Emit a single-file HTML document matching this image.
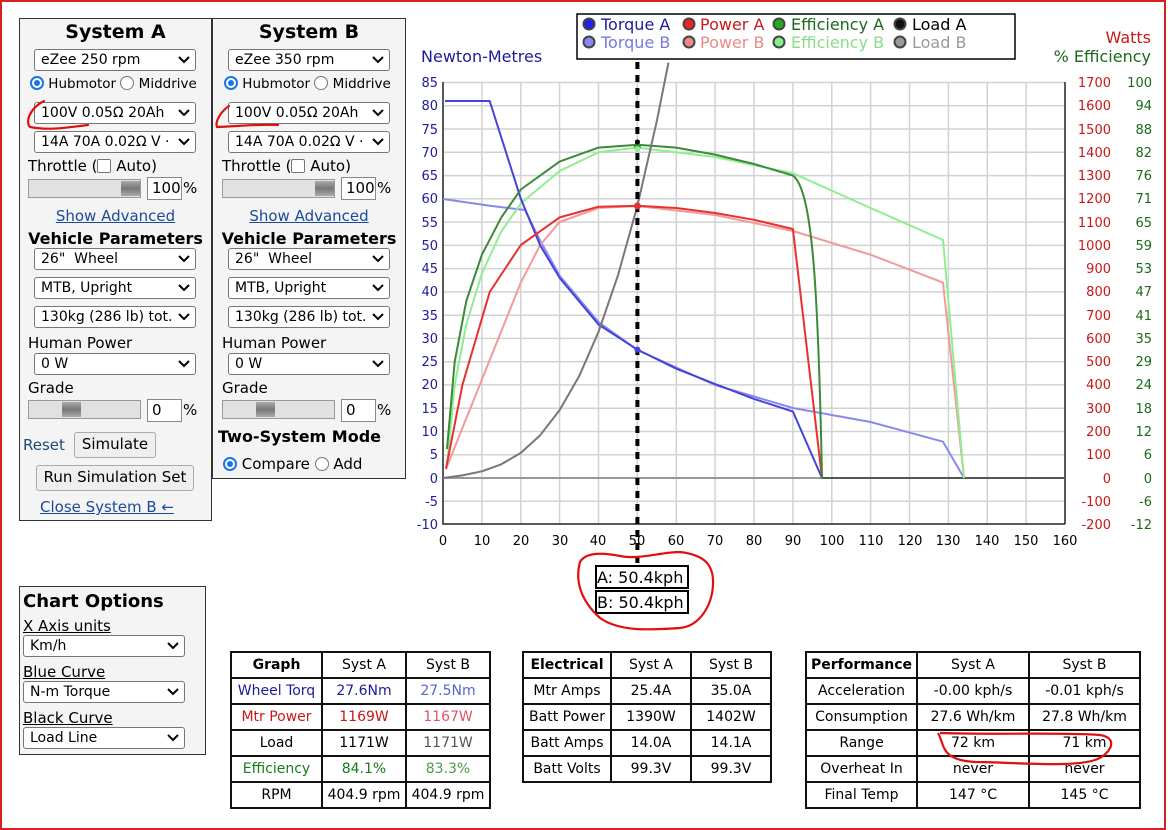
<!DOCTYPE html>
<html><head><meta charset="utf-8"><style>
*{box-sizing:border-box;margin:0;padding:0}
body{width:1168px;height:830px;position:relative;background:#fff;font-family:"DejaVu Sans","Liberation Sans",sans-serif;overflow:hidden;color:#000}
.a{position:absolute;white-space:nowrap}
.panel{position:absolute;background:#f4f4f4;border:1px solid #333}
.sel{position:absolute;background:#fff;border:1px solid #767676;border-radius:3px;font-size:14px;line-height:20px;padding-left:6px;height:22px;overflow:hidden;white-space:nowrap}
.sel svg{position:absolute;right:5px;top:6px;background:#fff}
.t{font-size:15px}
.radio{display:inline-block;width:14px;height:14px;border-radius:50%;border:1px solid #767676;background:#fff;vertical-align:-2px;position:relative}
.radio.on{border:2px solid #1a73e8}
.radio.on:after{content:"";position:absolute;left:2px;top:2px;width:6px;height:6px;border-radius:50%;background:#1a73e8}
.cb{display:inline-block;width:14px;height:14px;border:1px solid #767676;border-radius:2px;background:#fff;vertical-align:-2px}
.slider{position:absolute;height:19px;background:#e1e1e1;border:1px solid #999}
.thumb{position:absolute;top:1px;width:19px;height:15px;background:linear-gradient(#aaa,#777,#aaa)}
.inp{position:absolute;background:#fff;border:1px solid #888;font-size:15px;line-height:20px;padding-left:4px;height:23px}
.btn{position:absolute;background:#efefef;border:1px solid #aaa;border-radius:3px;font-size:15px;text-align:center;line-height:22px}
.lnk{color:#1a4a9a;text-decoration:underline}
table{position:absolute;border-collapse:collapse;font-size:14px;text-align:center}
td{border:2px solid #111;height:26px;padding:0}
th{border:2px solid #111;height:26px;font-weight:bold}
</style></head><body>
<div style="position:absolute;left:0;top:0;width:1166px;height:830px;border:2px solid #d82020"></div>

<!-- System A -->
<div class="panel" style="left:19px;top:18px;width:193px;height:503px"></div>
<div class="a" style="left:19px;top:21px;width:193px;text-align:center;font-weight:bold;font-size:19px">System A</div>
<div class="sel" style="left:34px;top:49px;width:162px">eZee 250 rpm<svg width="12" height="8"><path d="M1 1l5 5 5-5" fill="none" stroke="#000" stroke-width="2"/></svg></div>
<div class="a" style="left:30px;top:76px;font-size:13.5px"><span class="radio on"></span> Hubmotor <span class="radio"></span> Middrive</div>
<div class="sel" style="left:34px;top:102px;width:162px">100V 0.05Ω 20Ah<svg width="12" height="8"><path d="M1 1l5 5 5-5" fill="none" stroke="#000" stroke-width="2"/></svg></div>
<div class="sel" style="left:34px;top:131px;width:162px">14A 70A 0.02Ω V ·<svg width="12" height="8"><path d="M1 1l5 5 5-5" fill="none" stroke="#000" stroke-width="2"/></svg></div>
<div class="a t" style="left:28px;top:157px">Throttle (<span class="cb"></span> Auto)</div>
<div class="slider" style="left:28px;top:179px;width:113px"><div class="thumb" style="left:92px"></div></div>
<div class="inp" style="left:147px;top:177px;width:35px">100</div><div class="a t" style="left:183px;top:179px">%</div>
<div class="a t lnk" style="left:19px;top:207px;width:193px;text-align:center">Show Advanced</div>
<div class="a" style="left:19px;top:229px;width:193px;text-align:center;font-weight:bold;font-size:16px">Vehicle Parameters</div>
<div class="sel" style="left:34px;top:248px;width:162px">26"&nbsp; Wheel<svg width="12" height="8"><path d="M1 1l5 5 5-5" fill="none" stroke="#000" stroke-width="2"/></svg></div>
<div class="sel" style="left:34px;top:277px;width:162px">MTB, Upright<svg width="12" height="8"><path d="M1 1l5 5 5-5" fill="none" stroke="#000" stroke-width="2"/></svg></div>
<div class="sel" style="left:34px;top:306px;width:162px">130kg (286 lb) tot.<svg width="12" height="8"><path d="M1 1l5 5 5-5" fill="none" stroke="#000" stroke-width="2"/></svg></div>
<div class="a t" style="left:28px;top:334px">Human Power</div>
<div class="sel" style="left:34px;top:353px;width:162px">0 W<svg width="12" height="8"><path d="M1 1l5 5 5-5" fill="none" stroke="#000" stroke-width="2"/></svg></div>
<div class="a t" style="left:28px;top:379px">Grade</div>
<div class="slider" style="left:28px;top:400px;width:113px"><div class="thumb" style="left:33px"></div></div>
<div class="inp" style="left:147px;top:399px;width:35px">0</div><div class="a t" style="left:183px;top:401px">%</div>
<div class="a t" style="left:23px;top:436px;color:#1a4a7a">Reset</div>
<div class="btn" style="left:74px;top:432px;width:82px;height:26px">Simulate</div>
<div class="btn" style="left:36px;top:465px;width:158px;height:26px">Run Simulation Set</div>
<div class="a t lnk" style="left:40px;top:498px">Close System B ←</div>

<!-- System B -->
<div class="panel" style="left:212px;top:18px;width:194px;height:461px"></div>
<div class="a" style="left:212px;top:21px;width:194px;text-align:center;font-weight:bold;font-size:19px">System B</div>
<div class="sel" style="left:228px;top:49px;width:162px">eZee 350 rpm<svg width="12" height="8"><path d="M1 1l5 5 5-5" fill="none" stroke="#000" stroke-width="2"/></svg></div>
<div class="a" style="left:224px;top:76px;font-size:13.5px"><span class="radio on"></span> Hubmotor <span class="radio"></span> Middrive</div>
<div class="sel" style="left:228px;top:102px;width:162px">100V 0.05Ω 20Ah<svg width="12" height="8"><path d="M1 1l5 5 5-5" fill="none" stroke="#000" stroke-width="2"/></svg></div>
<div class="sel" style="left:228px;top:131px;width:162px">14A 70A 0.02Ω V ·<svg width="12" height="8"><path d="M1 1l5 5 5-5" fill="none" stroke="#000" stroke-width="2"/></svg></div>
<div class="a t" style="left:222px;top:157px">Throttle (<span class="cb"></span> Auto)</div>
<div class="slider" style="left:222px;top:179px;width:113px"><div class="thumb" style="left:92px"></div></div>
<div class="inp" style="left:341px;top:177px;width:35px">100</div><div class="a t" style="left:377px;top:179px">%</div>
<div class="a t lnk" style="left:212px;top:207px;width:194px;text-align:center">Show Advanced</div>
<div class="a" style="left:212px;top:229px;width:194px;text-align:center;font-weight:bold;font-size:16px">Vehicle Parameters</div>
<div class="sel" style="left:228px;top:248px;width:162px">26"&nbsp; Wheel<svg width="12" height="8"><path d="M1 1l5 5 5-5" fill="none" stroke="#000" stroke-width="2"/></svg></div>
<div class="sel" style="left:228px;top:277px;width:162px">MTB, Upright<svg width="12" height="8"><path d="M1 1l5 5 5-5" fill="none" stroke="#000" stroke-width="2"/></svg></div>
<div class="sel" style="left:228px;top:306px;width:162px">130kg (286 lb) tot.<svg width="12" height="8"><path d="M1 1l5 5 5-5" fill="none" stroke="#000" stroke-width="2"/></svg></div>
<div class="a t" style="left:222px;top:334px">Human Power</div>
<div class="sel" style="left:228px;top:353px;width:162px">0 W<svg width="12" height="8"><path d="M1 1l5 5 5-5" fill="none" stroke="#000" stroke-width="2"/></svg></div>
<div class="a t" style="left:222px;top:379px">Grade</div>
<div class="slider" style="left:222px;top:400px;width:113px"><div class="thumb" style="left:33px"></div></div>
<div class="inp" style="left:341px;top:399px;width:35px">0</div><div class="a t" style="left:377px;top:401px">%</div>
<div class="a" style="left:218px;top:427px;font-weight:bold;font-size:16px">Two-System Mode</div>
<div class="a t" style="left:223px;top:455px"><span class="radio on"></span> Compare <span class="radio"></span> Add</div>

<!-- Chart options -->
<div class="panel" style="left:19px;top:586px;width:187px;height:169px"></div>
<div class="a" style="left:23px;top:591px;font-weight:bold;font-size:18px">Chart Options</div>
<div class="a t" style="left:23px;top:617px;text-decoration:underline">X Axis units</div>
<div class="sel" style="left:23px;top:635px;width:162px">Km/h<svg width="12" height="8"><path d="M1 1l5 5 5-5" fill="none" stroke="#000" stroke-width="2"/></svg></div>
<div class="a t" style="left:23px;top:663px;text-decoration:underline">Blue Curve</div>
<div class="sel" style="left:23px;top:681px;width:162px">N-m Torque<svg width="12" height="8"><path d="M1 1l5 5 5-5" fill="none" stroke="#000" stroke-width="2"/></svg></div>
<div class="a t" style="left:23px;top:709px;text-decoration:underline">Black Curve</div>
<div class="sel" style="left:23px;top:727px;width:162px">Load Line<svg width="12" height="8"><path d="M1 1l5 5 5-5" fill="none" stroke="#000" stroke-width="2"/></svg></div>

<!-- Chart -->
<svg class="a" style="left:0;top:0" width="1168" height="830" font-family="DejaVu Sans, Liberation Sans, sans-serif">
<g stroke="#d2d2d2" stroke-width="1.5" fill="none">
<path d="M481.9 82V524M520.8 82V524M559.6 82V524M598.5 82V524M637.4 82V524M676.3 82V524M715.1 82V524M754 82V524M792.9 82V524M831.8 82V524M870.6 82V524M909.5 82V524M948.4 82V524M987.3 82V524M1026.1 82V524"/>
<path d="M443 82.5H1065M443 105.8H1065M443 129H1065M443 152.3H1065M443 175.6H1065M443 198.8H1065M443 222.1H1065M443 245.4H1065M443 268.6H1065M443 291.9H1065M443 315.2H1065M443 338.4H1065M443 361.7H1065M443 384.9H1065M443 408.2H1065M443 431.5H1065M443 454.7H1065M443 501.3H1065"/>
</g>
<path d="M443 478H1065" stroke="#999" stroke-width="2"/>
<path d="M443 82V524H1065M1065 82V524" stroke="#222" stroke-width="1.5" fill="none"/>
<g font-size="13" fill="#1c1c9a" text-anchor="end">
<text x="438" y="87">85</text><text x="438" y="110">80</text><text x="438" y="134">75</text><text x="438" y="157">70</text><text x="438" y="180">65</text><text x="438" y="203">60</text><text x="438" y="227">55</text><text x="438" y="250">50</text><text x="438" y="273">45</text><text x="438" y="296">40</text><text x="438" y="320">35</text><text x="438" y="343">30</text><text x="438" y="366">25</text><text x="438" y="389">20</text><text x="438" y="413">15</text><text x="438" y="436">10</text><text x="438" y="459">5</text><text x="438" y="483">0</text><text x="438" y="506">-5</text><text x="438" y="529">-10</text>
</g>
<g font-size="13" fill="#c81818" text-anchor="end">
<text x="1111" y="87">1700</text><text x="1111" y="110">1600</text><text x="1111" y="134">1500</text><text x="1111" y="157">1400</text><text x="1111" y="180">1300</text><text x="1111" y="203">1200</text><text x="1111" y="227">1100</text><text x="1111" y="250">1000</text><text x="1111" y="273">900</text><text x="1111" y="296">800</text><text x="1111" y="320">700</text><text x="1111" y="343">600</text><text x="1111" y="366">500</text><text x="1111" y="389">400</text><text x="1111" y="413">300</text><text x="1111" y="436">200</text><text x="1111" y="459">100</text><text x="1111" y="483">0</text><text x="1111" y="506">-100</text><text x="1111" y="529">-200</text>
</g>
<g font-size="13" fill="#1a6a1a" text-anchor="end">
<text x="1152" y="87">100</text><text x="1152" y="110">94</text><text x="1152" y="134">88</text><text x="1152" y="157">82</text><text x="1152" y="180">76</text><text x="1152" y="203">71</text><text x="1152" y="227">65</text><text x="1152" y="250">59</text><text x="1152" y="273">53</text><text x="1152" y="296">47</text><text x="1152" y="320">41</text><text x="1152" y="343">35</text><text x="1152" y="366">29</text><text x="1152" y="389">24</text><text x="1152" y="413">18</text><text x="1152" y="436">12</text><text x="1152" y="459">6</text><text x="1152" y="483">0</text><text x="1152" y="506">-6</text><text x="1152" y="529">-12</text>
</g>
<g font-size="13" fill="#000" text-anchor="middle">
<text x="443" y="545">0</text><text x="482" y="545">10</text><text x="521" y="545">20</text><text x="560" y="545">30</text><text x="598" y="545">40</text><text x="637" y="545">50</text><text x="676" y="545">60</text><text x="715" y="545">70</text><text x="754" y="545">80</text><text x="793" y="545">90</text><text x="832" y="545">100</text><text x="871" y="545">110</text><text x="910" y="545">120</text><text x="948" y="545">130</text><text x="987" y="545">140</text><text x="1026" y="545">150</text><text x="1065" y="545">160</text>
</g>
<text x="421" y="62" font-size="16" fill="#1c1c9a">Newton-Metres</text>
<text x="1151" y="43" font-size="16" fill="#c81818" text-anchor="end">Watts</text>
<text x="1151" y="62" font-size="16" fill="#1a6a1a" text-anchor="end">% Efficiency</text>

<g fill="none" stroke-width="2" stroke-linejoin="round">
<path d="M822 478H1065" stroke="#555"/>
<path stroke="#8888ee" d="M443 199L490 205.8L525 210L540.2 240.7L559.6 275.6L598.5 322L637.4 350L715.1 385L792.9 408L870.6 422L943 441.7L964 478"/>
<path stroke="#f29a9a" d="M446 469L520.8 282.6L540.2 245L559.6 222L598.5 208L637.4 206L715.1 215L792.9 231L870.6 254.7L943 282.6L964 478"/>
<path stroke="#8fee8f" d="M447 464L454.7 385L466.3 324.5L481.9 273.3L501.3 231.4L520.8 203.5L559.6 171L598.5 152.3L637.4 147.6L715.1 157L792.9 173.2L870.6 208L943 240L964 478"/>
<path stroke="#4444dd" d="M445 101L489.7 101L520.8 198.8L540.2 245.4L559.6 277.9L598.5 324.5L637.4 349.6L676.3 368.7L715.1 384L754 398.9L792.9 411.5L822 478"/>
<path stroke="#e83030" d="M446 468.7L462.4 385L489.7 292L520.8 245L559.6 217.4L598.5 206.7L637.4 205.8L676.3 208L715.1 213L754 219.8L792.9 229L822 478"/>
<path stroke="#3a8a3a" d="M447 449L454.7 361.7L466.3 301L481.9 254.7L501.3 217.4L520.8 189.5L559.6 161.6L598.5 147.6L637.4 144.8L676.3 147.6L715.1 154.6L754 164L792.9 175.6C812 190 818 280 822 478"/>
<path stroke="#777" d="M443 478L462.4 475.4L481.9 471.3L501.3 464.3L520.8 452.9L540.2 435.2L559.6 410.1L579.1 376.3L598.5 331.9L617.9 275.6L637.4 205.8L656.8 121.1L668.5 62.5"/>
</g>
<path d="M637.4 62V600" stroke="#000" stroke-width="4" stroke-dasharray="7,6"/>
<circle cx="637.4" cy="349.6" r="3" fill="#4444dd"/><circle cx="637.4" cy="206" r="3.5" fill="#e83030"/><circle cx="637.4" cy="146" r="3.5" fill="#3a8a3a"/><circle cx="637.4" cy="149" r="3" fill="#8fee8f"/><circle cx="637.4" cy="142" r="2.5" fill="#000"/>

<!-- legend -->
<rect x="577" y="14" width="438" height="45" fill="#fff" stroke="#000" stroke-width="1.5"/>
<g font-size="16">
<circle cx="589" cy="24" r="5.5" fill="#2222ee" stroke="#444" stroke-width="2"/><text x="601" y="30" fill="#1c1c9a">Torque A</text>
<circle cx="689" cy="24" r="5.5" fill="#ee2222" stroke="#444" stroke-width="2"/><text x="700" y="30" fill="#c81818">Power A</text>
<circle cx="779" cy="24" r="5.5" fill="#22aa22" stroke="#444" stroke-width="2"/><text x="791" y="30" fill="#1a6a1a">Efficiency A</text>
<circle cx="900" cy="24" r="5.5" fill="#111" stroke="#444" stroke-width="2"/><text x="912" y="30" fill="#000">Load A</text>
<circle cx="589" cy="42" r="5.5" fill="#8888ee" stroke="#444" stroke-width="2"/><text x="601" y="48" fill="#7777dd">Torque B</text>
<circle cx="689" cy="42" r="5.5" fill="#f08888" stroke="#444" stroke-width="2"/><text x="700" y="48" fill="#ee8888">Power B</text>
<circle cx="779" cy="42" r="5.5" fill="#88ee88" stroke="#444" stroke-width="2"/><text x="791" y="48" fill="#88dd88">Efficiency B</text>
<circle cx="900" cy="42" r="5.5" fill="#999" stroke="#444" stroke-width="2"/><text x="912" y="48" fill="#999">Load B</text>
</g>
<rect x="596" y="566" width="92" height="22" fill="#fff" stroke="#000" stroke-width="2"/>
<text x="597" y="583" font-size="16">A: 50.4kph</text>
<rect x="596" y="591" width="92" height="22" fill="#fff" stroke="#000" stroke-width="2"/>
<text x="597" y="608" font-size="16">B: 50.4kph</text>
<g fill="none" stroke="#e01010" stroke-width="2.2" stroke-linecap="round">
<path d="M44 101C30 108 25 122 30 127C50 131 70 127 88 125"/>
<path d="M229 106C220 112 215 122 217 127C240 126 260 124 278 125"/>
<path d="M580 562C575 580 580 600 600 618C620 632 650 630 680 628C700 626 712 605 713 585C714 565 705 555 680 552C660 552 640 560 620 556C600 552 585 553 580 562"/>
</g>
</svg>

<table style="left:230px;top:651px;width:261px">
<tr><th style="width:91px">Graph</th><td style="width:84px">Syst A</td><td>Syst B</td></tr>
<tr style="color:#1c1c9a"><td>Wheel Torq</td><td>27.6Nm</td><td style="color:#5566cc">27.5Nm</td></tr>
<tr style="color:#c81818"><td>Mtr Power</td><td>1169W</td><td style="color:#dd5566">1167W</td></tr>
<tr><td>Load</td><td>1171W</td><td style="color:#555">1171W</td></tr>
<tr style="color:#1a7a1a"><td>Efficiency</td><td>84.1%</td><td style="color:#4a9a4a">83.3%</td></tr>
<tr><td>RPM</td><td>404.9 rpm</td><td>404.9 rpm</td></tr>
</table>
<table style="left:522px;top:651px;width:250px">
<tr><th style="width:88px">Electrical</th><td style="width:80px">Syst A</td><td>Syst B</td></tr>
<tr><td>Mtr Amps</td><td>25.4A</td><td>35.0A</td></tr>
<tr><td>Batt Power</td><td>1390W</td><td>1402W</td></tr>
<tr><td>Batt Amps</td><td>14.0A</td><td>14.1A</td></tr>
<tr><td>Batt Volts</td><td>99.3V</td><td>99.3V</td></tr>
</table>
<table style="left:805px;top:651px;width:336px">
<tr><th style="width:111px">Performance</th><td style="width:112px">Syst A</td><td>Syst B</td></tr>
<tr><td>Acceleration</td><td>-0.00 kph/s</td><td>-0.01 kph/s</td></tr>
<tr><td>Consumption</td><td>27.6 Wh/km</td><td>27.8 Wh/km</td></tr>
<tr><td>Range</td><td>72 km</td><td>71 km</td></tr>
<tr><td>Overheat In</td><td>never</td><td>never</td></tr>
<tr><td>Final Temp</td><td>147 °C</td><td>145 °C</td></tr>
</table>
<svg class="a" style="left:0;top:0" width="1168" height="830"><path d="M938 733C945 745 940 760 975 762C1010 762 1070 768 1095 760C1110 755 1120 738 1100 735C1060 732 1000 735 940 733" fill="none" stroke="#e01010" stroke-width="2.2"/></svg>
</body></html>
